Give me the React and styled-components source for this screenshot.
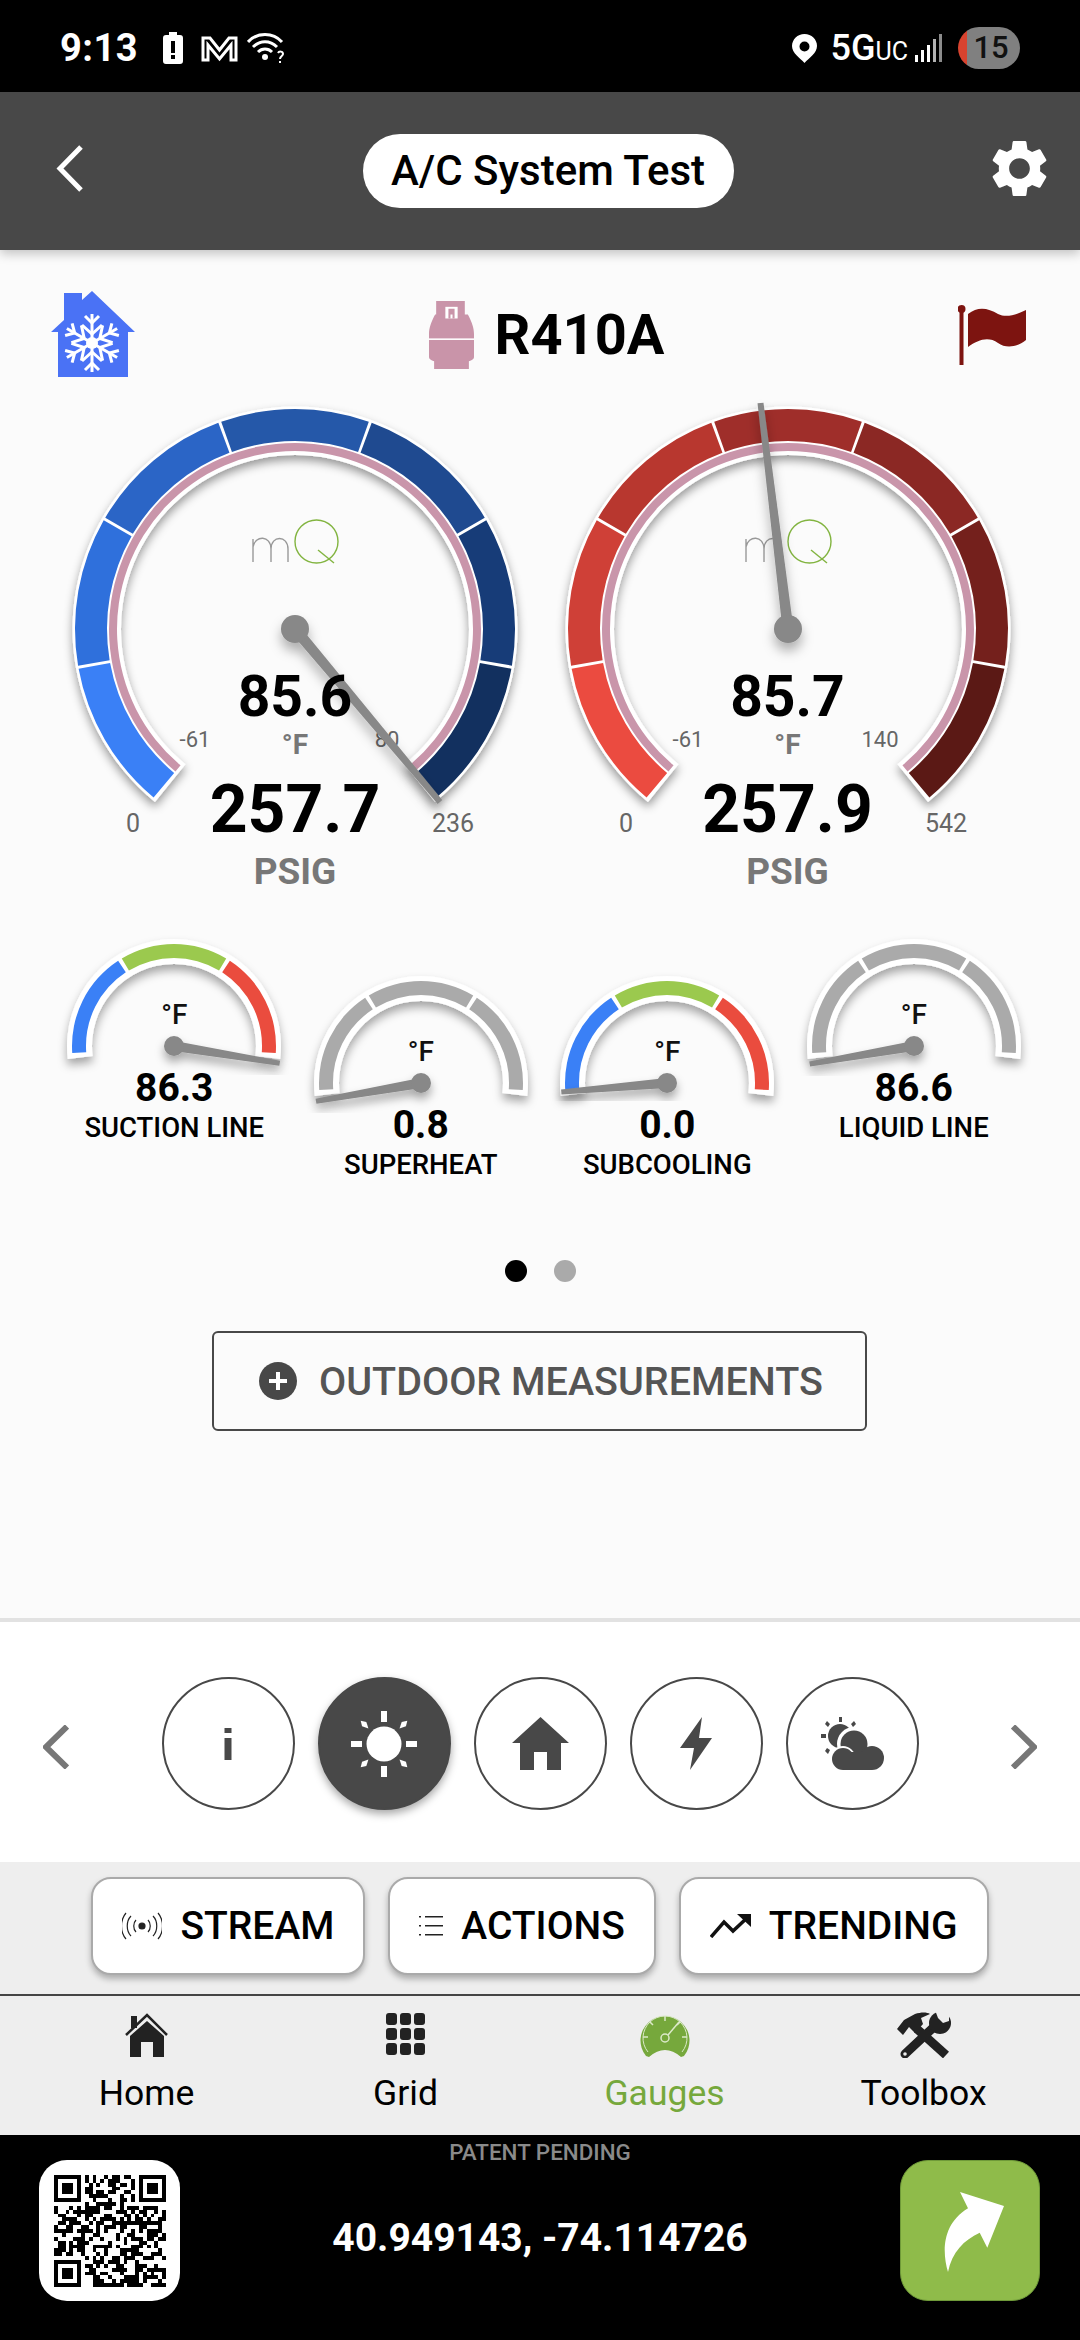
import React from 'react';
import styled, { createGlobalStyle } from 'styled-components';
import { MdSettings } from 'react-icons/md';

const GlobalStyle = createGlobalStyle`
  html, body {
    margin: 0;
    padding: 0;
    background: #fbfbfb;
    font-family: Roboto, "Liberation Sans", sans-serif;
  }
  * { box-sizing: border-box; }
`;

/* gauge geometry, degrees are clockwise from 12 o'clock */
function polar(r, deg) {
  const a = (deg * Math.PI) / 180;
  return [r * Math.sin(a), -r * Math.cos(a)];
}

function sector(inner, outer, from, to) {
  const [x1, y1] = polar(outer, from);
  const [x2, y2] = polar(outer, to);
  const [x3, y3] = polar(inner, to);
  const [x4, y4] = polar(inner, from);
  const large = to - from > 180 ? 1 : 0;
  return `M${x1} ${y1}A${outer} ${outer} 0 ${large} 1 ${x2} ${y2}L${x3} ${y3}A${inner} ${inner} 0 ${large} 0 ${x4} ${y4}Z`;
}

function needle(tx, ty, base, tip) {
  const len = Math.hypot(tx, ty);
  const nx = -ty / len;
  const ny = tx / len;
  return `${nx * base},${ny * base} ${tx + nx * tip},${ty + ny * tip} ${tx - nx * tip},${ty - ny * tip} ${-nx * base},${-ny * base}`;
}

const blues = ['#3a80f6', '#2f70dc', '#2b65c6', '#2558a9', '#1f4a90', '#173c78', '#12305f'];
const reds = ['#eb4b40', '#cf4037', '#b8372f', '#9f2e2a', '#8b2824', '#74201c', '#5b1915'];

function DropShadow({ id, dy, blur, opacity }) {
  return (
    <filter id={id} x="-30%" y="-30%" width="160%" height="160%">
      <feDropShadow dx="0" dy={dy} stdDeviation={blur} floodColor="#000" floodOpacity={opacity} />
    </filter>
  );
}

function BigGauge({ id, colors, tip, inner, outer, temp, pressure }) {
  return (
    <GaugeBox>
      <DialSvg viewBox="-246 -239 492 510" width="492" height="510">
        <defs>
          <DropShadow id={`ring-${id}`} dy={5} blur={5} opacity={0.4} />
          <DropShadow id={`hub-${id}`} dy={8} blur={6} opacity={0.3} />
        </defs>
        <path d={sector(174, 222.5, -141, 141)} fill="#fff" filter={`url(#ring-${id})`} />
        {colors.map((c, i) => (
          <path key={c} d={sector(188, 220, -140 + i * 40 + (i ? 0.4 : 0), -100 + i * 40 - (i < 6 ? 0.4 : 0))} fill={c} />
        ))}
        <path d={sector(178, 186, -140, 140)} fill="#c995aa" />
        <g fill="none" strokeWidth="1.4">
          <path d="M-42 -67V-90M-42 -82C-40 -94 -24 -94 -24 -80V-67M-24 -80C-24 -94 -7 -94 -7 -80V-67" stroke="#999" />
          <circle cx="21.5" cy="-87.5" r="21.5" stroke="#82b440" />
          <path d="M23 -79L39 -66" stroke="#82b440" />
        </g>
        <TickText x="-100" y="118" $size={22}>-61</TickText>
        <TickText x={inner.x} y="118" $size={22}>{inner.label}</TickText>
        <TickText x="-162" y="203" $size={25}>0</TickText>
        <TickText x={outer.x} y="203" $size={25}>{outer.label}</TickText>
        <g filter={`url(#hub-${id})`}>
          <polygon points={needle(tip[0], tip[1], 5.5, 3)} fill="#888" />
          <circle r="14" fill="#888" />
        </g>
      </DialSvg>
      <Readout>
        <TempValue>{temp}</TempValue>
        <TempUnit>°F</TempUnit>
        <PressureValue>{pressure}</PressureValue>
        <PressureUnit>PSIG</PressureUnit>
      </Readout>
    </GaugeBox>
  );
}

function MiniGauge({ id, colors, tip, value, label, low }) {
  const marks = [-94, -32, 32, 94];
  return (
    <MiniBox $low={low}>
      <MiniSvg viewBox="-123 -116 246 139" width="246" height="139">
        <defs>
          <DropShadow id={`mini-${id}`} dy={6} blur={5} opacity={0.35} />
        </defs>
        <path d={sector(82, 107, -97, 97)} fill="#fff" filter={`url(#mini-${id})`} />
        {colors.map((c, i) => (
          <path key={i} d={sector(88, 102, marks[i] + (i ? 1.2 : 0), marks[i + 1] - (i < 2 ? 1.2 : 0))} fill={c} />
        ))}
        <g filter={`url(#mini-${id})`}>
          <polygon points={needle(tip[0], tip[1], 5, 2.5)} fill="#888" />
          <circle r="10" fill="#888" />
        </g>
      </MiniSvg>
      <MiniUnit $low={low}>°F</MiniUnit>
      <MiniValue>{value}</MiniValue>
      <MiniLabel>{label}</MiniLabel>
    </MiniBox>
  );
}

function Snowflake() {
  const arms = [0, 60, 120, 180, 240, 300];
  return (
    <g transform="translate(52 58)" stroke="#fff" strokeWidth="3" fill="none">
      <circle r="6" fill="#fff" stroke="none" />
      {arms.map((a) => (
        <g key={a} transform={`rotate(${a})`}>
          <path d="M0 0V-29" />
          <path d="M-7 -27L0 -20L7 -27" />
          <path d="M-10 -18L0 -9L10 -18" />
        </g>
      ))}
    </g>
  );
}

function QrCode() {
  const n = 29;
  const inFinder = (x, y) => (x < 8 && y < 8) || (x > 20 && y < 8) || (x < 8 && y > 20);
  const cells = [];
  let seed = 4711;
  for (let y = 0; y < n; y += 1) {
    for (let x = 0; x < n; x += 1) {
      seed = (seed * 1103515245 + 12345) % 2147483648;
      if (!inFinder(x, y) && seed % 100 < 54) cells.push([x, y]);
    }
  }
  const finders = [[0, 0], [22, 0], [0, 22]];
  return (
    <svg viewBox="0 0 29 29" width="112" height="112" shapeRendering="crispEdges">
      {cells.map(([x, y]) => (
        <rect key={`${x}-${y}`} x={x} y={y} width="1" height="1" />
      ))}
      {finders.map(([x, y]) => (
        <g key={`${x}-${y}`}>
          <rect x={x + 0.5} y={y + 0.5} width="6" height="6" fill="none" stroke="#000" />
          <rect x={x + 2} y={y + 2} width="3" height="3" />
        </g>
      ))}
    </svg>
  );
}

export default function App() {
  return (
    <Page>
      <GlobalStyle />
      <StatusBar>
        <StatusGroup>
          <Clock>9:13</Clock>
          <svg width="22" height="32" viewBox="0 0 22 32" style={{ marginLeft: 24 }}>
            <path d="M7 0h8v3h3a3 3 0 0 1 3 3v23a3 3 0 0 1-3 3H4a3 3 0 0 1-3-3V6a3 3 0 0 1 3-3h3zM9 9v12h4V9zM9 23v4h4v-4z" fill="#fff" fillRule="evenodd" />
          </svg>
          <svg width="37" height="27" viewBox="0 0 37 27" style={{ marginLeft: 17 }}>
            <path d="M2 25V3l7 0 9.5 12L28 3h7v22h-5V10l-11.5 14L7 10v15z" fill="none" stroke="#fff" strokeWidth="3" />
          </svg>
          <svg width="40" height="33" viewBox="0 0 40 33" style={{ marginLeft: 9 }}>
            <g fill="none" stroke="#fff" strokeWidth="3">
              <path d="M1 10C10 0 26 0 35 10" />
              <path d="M6 15C13 8 23 8 30 15" />
              <path d="M11 20C15 16 21 16 25 20" />
            </g>
            <circle cx="18" cy="25" r="3" fill="#fff" />
            <path d="M31 21c1-2 5-2 5 1 0 2-3 2-3 5M33 29v2" fill="none" stroke="#fff" strokeWidth="2" />
          </svg>
        </StatusGroup>
        <StatusGroup>
          <svg width="25" height="29" viewBox="0 0 25 29">
            <path d="M12.5 0C5.5 0 0 5.5 0 12c0 7 8 12 12.5 17C17 24 25 19 25 12 25 5.5 19.500 0 12.5 0zm0 7.5a5 5 0 1 1 0 10 5 5 0 0 1 0-10z" fill="#fff" fillRule="evenodd" />
          </svg>
          <Network>5G<small>UC</small></Network>
          <svg width="27" height="28" viewBox="0 0 27 28" style={{ marginLeft: 7 }}>
            <g fill="#fff">
              <rect x="0" y="21" width="3" height="7" />
              <rect x="6" y="16" width="3" height="12" />
              <rect x="12" y="11" width="3" height="17" />
              <rect x="18" y="5" width="3" height="23" opacity="0.7" />
              <rect x="24" y="0" width="3" height="28" opacity="0.55" />
            </g>
          </svg>
          <BatteryPill><span>15</span></BatteryPill>
        </StatusGroup>
      </StatusBar>

      <Header>
        <svg width="30" height="48" viewBox="0 0 30 48">
          <path d="M26 3L5 24.5L26 46" fill="none" stroke="#fff" strokeWidth="5" />
        </svg>
        <TitlePill>A/C System Test</TitlePill>
        <MdSettings size={69} color="#fff" />
      </Header>

      <Body>
        <TitleRow>
          <svg width="104" height="100" viewBox="0 0 104 100" style={{ margin: '-8px -9px -8px -11px' }}>
            <path d="M52 6L95 47H88V92H18V47H11L24 35V8H42V15z" fill="#4a72f5" />
            <Snowflake />
          </svg>
          <Refrigerant>
            <svg width="45" height="68" viewBox="8 4 44 70" preserveAspectRatio="none">
              <path d="M15 4H43V18H46C50 26 52 32 52 38V62C52 64 50 65 47 66V74H13V66C10 65 8 64 8 62V38C8 32 10 26 14 18H15z" fill="#c994a9" />
              <rect x="8" y="42.5" width="44" height="1.6" fill="#fff" />
              <path d="M24 10H36V22H24z" fill="#fff" />
              <path d="M27 12H33V22H31V18H29V22H27z" fill="#c994a9" />
            </svg>
            <RefrigerantName>R410A</RefrigerantName>
          </Refrigerant>
          <svg width="68" height="60" viewBox="0 0 68 60">
            <rect x="1.5" y="3" width="4" height="57" fill="#7d1410" />
            <circle cx="3.5" cy="4" r="4" fill="#7d1410" />
            <path d="M10 9C20 1 30 3 40 9C48 13 58 10 68 5V35C60 42 48 44 40 38C30 31 20 35 10 42z" fill="#7d1410" />
          </svg>
        </TitleRow>

        <GaugesRow>
          <BigGauge
            id="low"
            colors={blues}
            tip={[145, 173]}
            inner={{ x: 92, label: '80' }}
            outer={{ x: 158, label: '236' }}
            temp="85.6"
            pressure="257.7"
          />
          <BigGauge
            id="high"
            colors={reds}
            tip={[-27.5, -226]}
            inner={{ x: 92, label: '140' }}
            outer={{ x: 158, label: '542' }}
            temp="85.7"
            pressure="257.9"
          />
        </GaugesRow>

        <MiniRow>
          <MiniGauge id="a" colors={['#3a80f6', '#9bc94e', '#ea4c3e']} tip={[105.7, 17.3]} value="86.3" label="SUCTION LINE" />
          <MiniGauge id="b" colors={['#aaa', '#aaa', '#aaa']} tip={[-105, 18.3]} value="0.8" label="SUPERHEAT" low />
          <MiniGauge id="c" colors={['#3a80f6', '#9bc94e', '#ea4c3e']} tip={[-105.7, 9]} value="0.0" label="SUBCOOLING" low />
          <MiniGauge id="d" colors={['#aaa', '#aaa', '#aaa']} tip={[-104.3, 18]} value="86.6" label="LIQUID LINE" />
        </MiniRow>

        <Dots>
          <Dot $active />
          <Dot />
        </Dots>

        <OutdoorButton>
          <svg width="38" height="38" viewBox="0 0 38 38">
            <circle cx="19" cy="19" r="19" fill="#484848" />
            <path d="M19 10V28M10 19H28" stroke="#fff" strokeWidth="4" />
          </svg>
          OUTDOOR MEASUREMENTS
        </OutdoorButton>
      </Body>

      <Divider />

      <Selector>
        <svg width="26" height="44" viewBox="0 0 26 44">
          <path d="M24 1.5L3 22L24 42.5" fill="none" stroke="#777" strokeWidth="6" />
        </svg>
        <CircleGroup>
          <CircleButton>
            <svg width="8" height="32" viewBox="0 0 8 32" fill="#484848">
              <rect x="0.5" width="7" height="5" />
              <rect x="0.5" y="10" width="7" height="22" />
            </svg>
          </CircleButton>
          <CircleButton $active>
            <svg width="66" height="66" viewBox="-33 -33 66 66" fill="#fff">
              <circle r="17.5" />
              {[0, 90, 180, 270].map((a) => (
                <rect key={a} x="-3" y="-33" width="6" height="11" transform={`rotate(${a})`} />
              ))}
              {[45, 135, 225, 315].map((a) => (
                <path key={a} d="M0 -33L3 -28L0 -22L-3 -28z" transform={`rotate(${a})`} />
              ))}
            </svg>
          </CircleButton>
          <CircleButton>
            <svg width="57" height="53" viewBox="0 0 57 53" fill="#484848">
              <path d="M28.5 0L57 26H49V53H35V35H22V53H8V26H0z" />
            </svg>
          </CircleButton>
          <CircleButton>
            <svg width="32" height="53" viewBox="0 0 32 53" fill="#484848">
              <path d="M22 0L0 31H14L10 53L32 21H19z" />
            </svg>
          </CircleButton>
          <CircleButton>
            <svg width="63" height="53" viewBox="0 0 63 53" fill="#484848">
              <circle cx="19" cy="19" r="12" />
              <rect x="18" y="0" width="3" height="5" />
              <rect x="0" y="17" width="5" height="4" />
              <path d="M6 4l3 3-2 3-3-3zM33 4l-3 3 2 3 3-3zM6 31l3 2-2 4-3-3z" />
              <circle cx="33" cy="27" r="17" fill="#fff" />
              <circle cx="33" cy="27" r="13.5" />
              <circle cx="22" cy="41" r="12" fill="#fff" />
              <circle cx="22" cy="42" r="11" />
              <circle cx="51" cy="41" r="12" />
              <rect x="22" y="35" width="29" height="18" />
            </svg>
          </CircleButton>
        </CircleGroup>
        <svg width="26" height="44" viewBox="0 0 26 44">
          <path d="M2 1.5L23 22L2 42.5" fill="none" stroke="#777" strokeWidth="6" />
        </svg>
      </Selector>

      <ActionBar>
        <ActionButton>
          <svg width="40" height="28" viewBox="0 0 40 28" fill="none" stroke="#222" strokeWidth="1.2">
            <circle cx="20" cy="14" r="3" fill="#222" />
            <path d="M14 8C11 11 11 17 14 20M26 8C29 11 29 17 26 20" />
            <path d="M9 4C4 9 4 19 9 24M31 4C36 9 36 19 31 24" />
            <path d="M4 1C-2 8 -2 20 4 27M36 1C42 8 42 20 36 27" />
          </svg>
          STREAM
        </ActionButton>
        <ActionButton>
          <svg width="24" height="22" viewBox="0 0 24 22" fill="#222">
            <rect x="0" y="1" width="2" height="1.5" />
            <rect x="6" y="1" width="18" height="1.5" />
            <rect x="0" y="10" width="2" height="1.5" />
            <rect x="6" y="10" width="18" height="1.5" />
            <rect x="0" y="19" width="2" height="1.5" />
            <rect x="6" y="19" width="18" height="1.5" />
          </svg>
          ACTIONS
        </ActionButton>
        <ActionButton>
          <svg width="41" height="24" viewBox="0 0 41 24">
            <path d="M1 23L14 8L23 17L38 3" fill="none" stroke="#111" strokeWidth="3.5" />
            <path d="M27 0H41V13z" fill="#111" />
          </svg>
          TRENDING
        </ActionButton>
      </ActionBar>

      <Nav>
        <NavItem>
          <svg width="44" height="44" viewBox="0 0 44 44" fill="#222">
            <path d="M1 22L22 2L42 22" fill="none" stroke="#222" strokeWidth="2.5" />
            <rect x="6" y="3" width="6" height="12" />
            <path d="M22 8L39 23V44H28V29H16V44H5V23z" />
          </svg>
          Home
        </NavItem>
        <NavItem>
          <NavGrid>
            {Array.from({ length: 9 }, (_, i) => (
              <NavCell key={i} />
            ))}
          </NavGrid>
          Grid
        </NavItem>
        <NavItem $active>
          <svg width="50" height="44" viewBox="0 0 50 44">
            <path d="M6 43A24.5 24.5 0 1 1 44 43L41 44Q25 30 9 44z" fill="#76a83c" />
            <path d="M8 39A22 22 0 1 1 42 39" fill="none" stroke="#dbe9c8" strokeWidth="1" />
            <g stroke="#dbe9c8" strokeWidth="1.5" fill="none">
              <path d="M25 3V8M10 9L13 12M40 9L37 12M3 24H8M47 24H42" />
              <circle cx="25" cy="25" r="4" />
              <path d="M28 22L39 9" />
            </g>
          </svg>
          Gauges
        </NavItem>
        <NavItem>
          <svg width="54" height="46" viewBox="0 0 54 46">
            <path d="M49 43L20 17" stroke="#222" strokeWidth="9" />
            <path d="M0 17L7 8L18 2C24 0 30 0 33 2L24 6L26 12L18 21L12 15L6 23z" fill="#222" />
            <path d="M8 42L39 13" stroke="#222" strokeWidth="9" strokeLinecap="round" />
            <circle cx="43" cy="11" r="11" fill="#222" />
            <path d="M38 -2L52 -2L52 9L46 11L41 6z" fill="#eee" />
            <circle cx="8" cy="42" r="1.8" fill="#eee" />
          </svg>
          Toolbox
        </NavItem>
      </Nav>

      <Footer>
        <PatentNote>PATENT PENDING</PatentNote>
        <FooterRow>
          <QrTile><QrCode /></QrTile>
          <Coordinates>40.949143, -74.114726</Coordinates>
          <ShareTile>
            <svg width="60" height="80" viewBox="0 0 60 80">
              <path d="M16 0L60 14L43.3 55.7L35.7 40.7C20 48 8 60 4 80C-2 60 -2 32 24 16.3z" fill="#fff" />
            </svg>
          </ShareTile>
        </FooterRow>
      </Footer>
    </Page>
  );
}

const Page = styled.div`
  width: 1080px;
  height: 2340px;
  display: flex;
  flex-direction: column;
  overflow: hidden;
  background: #fbfbfb;
  color: #000;
`;

const StatusBar = styled.div`
  height: 92px;
  flex: none;
  background: #000;
  color: #fff;
  padding: 4px 60px 0 60px;
  display: flex;
  align-items: center;
  justify-content: space-between;
`;

const StatusGroup = styled.div`
  display: flex;
  align-items: center;
`;

const Clock = styled.span`
  font-size: 38px;
  font-weight: 700;
  letter-spacing: 0.5px;
`;

const Network = styled.span`
  margin-left: 14px;
  font-size: 36px;
  font-weight: 500;
  small {
    font-size: 25px;
    font-weight: 400;
  }
`;

const BatteryPill = styled.div`
  width: 62px;
  height: 42px;
  margin-left: 16px;
  border-radius: 21px;
  background: linear-gradient(90deg, #d8432f 0 9px, #808080 9px);
  color: #111;
  font-size: 31px;
  font-weight: 500;
  line-height: 42px;
  text-align: center;
  span {
    margin-left: 4px;
  }
`;

const Header = styled.header`
  height: 158px;
  flex: none;
  background: #484848;
  padding: 0 26px 6px 55px;
  display: flex;
  align-items: center;
  justify-content: space-between;
  position: relative;
  z-index: 2;
  box-shadow: 0 4px 10px rgba(0, 0, 0, 0.22);
`;

const TitlePill = styled.div`
  width: 371px;
  height: 74px;
  margin: 6px 0 0 26px;
  border-radius: 37px;
  background: #fff;
  color: #000;
  font-size: 42px;
  font-weight: 500;
  line-height: 74px;
  text-align: center;
`;

const Body = styled.main`
  height: 1368px;
  flex: none;
  padding-top: 43px;
  display: flex;
  flex-direction: column;
`;

const TitleRow = styled.div`
  height: 84px;
  padding: 0 54px 0 51px;
  display: flex;
  align-items: center;
  justify-content: space-between;
`;

const Refrigerant = styled.div`
  display: flex;
  align-items: center;
  gap: 21px;
`;

const RefrigerantName = styled.h1`
  margin: 0;
  font-size: 56px;
  font-weight: 700;
  line-height: 64px;
`;

const GaugesRow = styled.div`
  margin: 13px 0 0 49px;
  display: grid;
  grid-template-columns: 492.5px 492.5px;
  height: 510px;
`;

const GaugeBox = styled.div`
  position: relative;
  height: 510px;
`;

const DialSvg = styled.svg`
  display: block;
  overflow: visible;
  font-family: Roboto, "Liberation Sans", sans-serif;
`;

const TickText = styled.text`
  font-size: ${(p) => p.$size}px;
  fill: #666;
  text-anchor: middle;
`;

const Readout = styled.div`
  position: absolute;
  top: 278px;
  left: 0;
  width: 492px;
  display: flex;
  flex-direction: column;
  align-items: center;
`;

const TempValue = styled.div`
  font-size: 57px;
  line-height: 57px;
  font-weight: 700;
`;

const TempUnit = styled.div`
  margin-top: 6px;
  font-size: 28px;
  line-height: 28px;
  font-weight: 700;
  color: #777;
`;

const PressureValue = styled.div`
  margin-top: 18px;
  font-size: 66px;
  line-height: 66px;
  font-weight: 700;
`;

const PressureUnit = styled.div`
  margin-top: 10px;
  font-size: 37px;
  line-height: 37px;
  font-weight: 700;
  color: #777;
`;

const MiniRow = styled.div`
  margin: 30px 0 0 51px;
  height: 260px;
  display: grid;
  grid-template-columns: repeat(4, 246.5px);
`;

const MiniBox = styled.div`
  position: relative;
  padding-top: ${(p) => (p.$low ? 37 : 0)}px;
  display: flex;
  flex-direction: column;
  align-items: center;
`;

const MiniSvg = styled.svg`
  display: block;
  overflow: visible;
`;

const MiniUnit = styled.div`
  position: absolute;
  top: ${(p) => (p.$low ? 108 : 71)}px;
  left: 0;
  right: 0;
  font-size: 28px;
  line-height: 28px;
  font-weight: 500;
  text-align: center;
  color: #111;
`;

const MiniValue = styled.div`
  font-size: 39px;
  line-height: 38px;
  font-weight: 700;
`;

const MiniLabel = styled.div`
  margin-top: 8px;
  font-size: 27.5px;
  line-height: 26px;
  font-weight: 500;
  white-space: nowrap;
`;

const Dots = styled.div`
  margin-top: 70px;
  display: flex;
  justify-content: center;
  gap: 27px;
`;

const Dot = styled.span`
  width: 22px;
  height: 22px;
  border-radius: 50%;
  background: ${(p) => (p.$active ? '#000' : '#aaa')};
`;

const OutdoorButton = styled.div`
  width: 655px;
  height: 100px;
  margin: 49px 0 0 212px;
  padding-left: 45px;
  border: 2px solid #484848;
  border-radius: 6px;
  display: flex;
  align-items: center;
  gap: 22px;
  color: #555;
  font-size: 39.5px;
  font-weight: 500;
  white-space: nowrap;
`;

const Divider = styled.div`
  height: 4px;
  flex: none;
  background: #e2e2e2;
`;

const Selector = styled.div`
  height: 240px;
  flex: none;
  background: #fff;
  padding: 9px 43px 0;
  display: flex;
  align-items: center;
  justify-content: space-between;
`;

const CircleGroup = styled.div`
  display: flex;
  gap: 23px;
  margin-top: -6px;
`;

const CircleButton = styled.div`
  width: 133px;
  height: 133px;
  border-radius: 50%;
  border: 2px solid #484848;
  background: ${(p) => (p.$active ? '#484848' : '#fff')};
  box-shadow: ${(p) => (p.$active ? '0 4px 8px rgba(0, 0, 0, 0.35)' : 'none')};
  display: flex;
  align-items: center;
  justify-content: center;
`;

const ActionBar = styled.div`
  height: 132px;
  flex: none;
  background: #eee;
  padding-bottom: 4px;
  display: flex;
  align-items: center;
  justify-content: center;
  gap: 23px;
`;

const ActionButton = styled.div`
  height: 98px;
  padding: 0 29px;
  border: 2px solid #aaa;
  border-radius: 20px;
  background: #fff;
  box-shadow: 0 4px 6px rgba(0, 0, 0, 0.28);
  display: flex;
  align-items: center;
  gap: 18px;
  color: #000;
  font-size: 39px;
  font-weight: 500;
`;

const Nav = styled.nav`
  height: 141px;
  flex: none;
  background: #eee;
  border-top: 2px solid #444;
  padding: 16px 27px 0 17px;
  display: grid;
  grid-template-columns: repeat(4, 1fr);
`;

const NavItem = styled.div`
  display: flex;
  flex-direction: column;
  align-items: center;
  color: ${(p) => (p.$active ? '#76a83c' : '#000')};
  font-size: 35.5px;
  line-height: 40px;
  svg {
    height: 46px;
    margin-bottom: 15px;
  }
`;

const NavGrid = styled.div`
  width: 40px;
  height: 42px;
  margin: 1px 0 18px;
  display: grid;
  grid-template-columns: repeat(3, 1fr);
  gap: 3px;
`;

const NavCell = styled.span`
  background: #222;
  border-radius: 3px;
`;

const Footer = styled.footer`
  height: 205px;
  flex: none;
  background: #000;
  display: flex;
  flex-direction: column;
`;

const PatentNote = styled.div`
  margin: 5px 0 -4px;
  color: #8a8a8a;
  font-size: 22.4px;
  font-weight: 500;
  line-height: 24px;
  text-align: center;
`;

const FooterRow = styled.div`
  padding: 0 40px 0 39px;
  display: flex;
  align-items: center;
  justify-content: space-between;
`;

const QrTile = styled.div`
  width: 141px;
  height: 141px;
  border-radius: 28px;
  background: #fff;
  display: flex;
  align-items: center;
  justify-content: center;
`;

const Coordinates = styled.div`
  margin-top: 14px;
  color: #fff;
  font-size: 39px;
  font-weight: 700;
  white-space: nowrap;
`;

const ShareTile = styled.div`
  width: 140px;
  height: 141px;
  border-radius: 28px;
  border: 1px solid #6f9a39;
  background: #8fbb4a;
  display: flex;
  align-items: center;
  justify-content: center;
  svg {
    margin: 0 0 -2px 8px;
  }
`;
